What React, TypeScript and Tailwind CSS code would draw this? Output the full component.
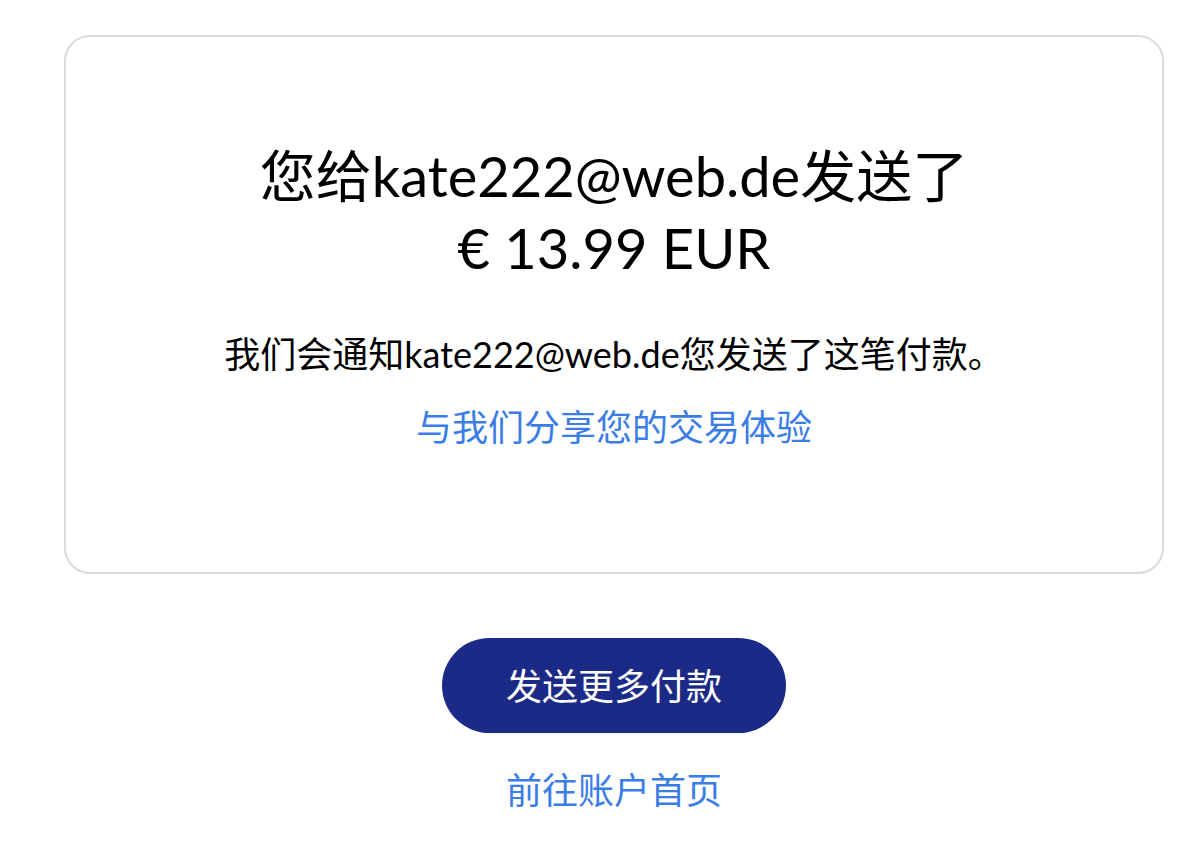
export default function App() {
  return (
    <main
      className="min-h-[862px] w-[1202px] bg-white text-black"
      style={{ fontFamily: 'Lato, "Noto Sans CJK SC", sans-serif' }}
    >
      <div className="pt-[35px] pl-[64px]">
        <ConfirmationCard />
        <Actions />
      </div>
    </main>
  )
}

function ConfirmationCard() {
  return (
    <section className="flex h-[539px] w-[1100px] flex-col items-center rounded-[26px] border-2 border-[#dedad5] pt-[103px]">
      <h1 className="text-center text-[56px] leading-[72px] font-normal">
        <span className="block">您给kate222@web.de发送了</span>
        <span className="block">€ 13.99 EUR</span>
      </h1>
      <p className="mt-[46px] text-[36px] leading-[48px]">
        我们会通知kate222@web.de您发送了这笔付款。
      </p>
      <a href="#" className="mt-[25px] text-[36px] leading-[48px] text-[#3b7de6]">
        与我们分享您的交易体验
      </a>
    </section>
  )
}

function Actions() {
  return (
    <div className="flex w-[1100px] flex-col items-center">
      <button className="mt-[64px] h-[95px] w-[344px] rounded-full bg-[#1c2a87] text-[36px] text-white">
        发送更多付款
      </button>
      <a href="#" className="mt-[33px] text-[36px] leading-[48px] text-[#3b7de6]">
        前往账户首页
      </a>
    </div>
  )
}
